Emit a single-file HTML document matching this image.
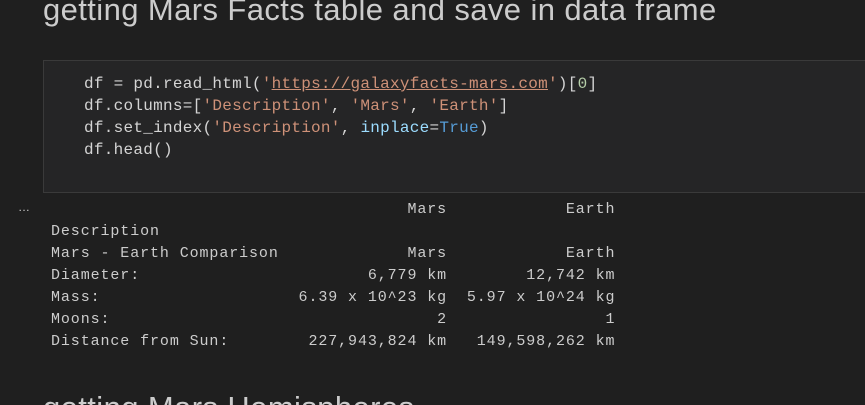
<!DOCTYPE html><html style="overflow:hidden;height:405px"><head><style>
body{margin:0;width:865px;height:405px;background:#1f1f1f;overflow:hidden;position:relative;font-family:"Liberation Sans",sans-serif;color:#cccccc}
.h{position:absolute;left:43px;font-size:31px;white-space:nowrap;letter-spacing:0.4px}
.box{position:absolute;left:43px;top:60px;width:830px;height:131px;background:#252526;border:1px solid #3a3a3a}
pre{margin:0;position:absolute;font-family:"Liberation Mono",monospace;white-space:pre}
.code{left:84px;top:73px;font-size:16px;line-height:22px;letter-spacing:0.27px;color:#d4d4d4}
.out{left:51px;top:199px;font-size:15px;line-height:22px;letter-spacing:0.9px;color:#cccccc}
.s{color:#ce9178}.n{color:#b5cea8}.k{color:#569cd6}.v{color:#9cdcfe}
.u{text-decoration:underline}
.dots{position:absolute;left:18px;top:200px;font-size:12px;color:#ccc}
</style></head><body>
<div class="h" style="top:-8px">getting Mars Facts table and save in data frame</div>
<div class="box"></div>
<pre class="code">df = pd.read_html(<span class="s">'<span class="u">https://galaxyfacts-mars.com</span>'</span>)[<span class="n">0</span>]
df.columns=[<span class="s">'Description'</span>, <span class="s">'Mars'</span>, <span class="s">'Earth'</span>]
df.set_index(<span class="s">'Description'</span>, <span class="v">inplace</span>=<span class="k">True</span>)
df.head()</pre>
<div class="dots">…</div>
<pre class="out">                                    Mars            Earth
Description
Mars - Earth Comparison             Mars            Earth
Diameter:                       6,779 km        12,742 km
Mass:                    6.39 x 10^23 kg  5.97 x 10^24 kg
Moons:                                 2                1
Distance from Sun:        227,943,824 km   149,598,262 km</pre>
<div class="h" style="top:390px;height:15px;overflow:hidden">getting Mars Hemispheres</div>
</body></html>
